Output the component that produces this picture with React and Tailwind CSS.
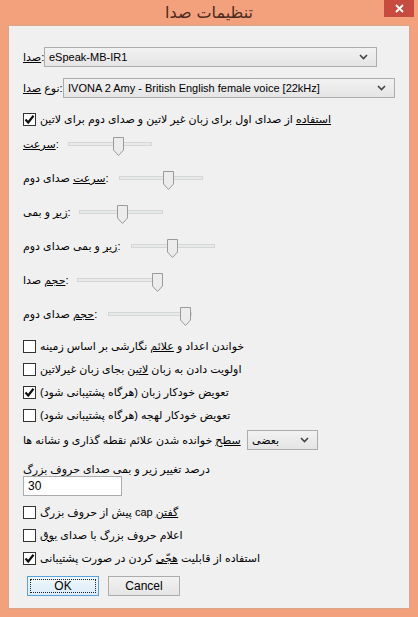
import React from "react";

const font = { fontFamily: '"Liberation Sans", "DejaVu Sans", sans-serif' };

const U = ({ children }) => <span className="underline">{children}</span>;
const Colon = () => <span>:</span>;

const Check = ({ checked }) => (
  <span className="w-[13px] h-[13px] border border-[#333333] bg-white flex items-center justify-center shrink-0">
    {checked && (
      <svg width="11" height="11" viewBox="0 0 11 11">
        <path d="M1.5 5.5 L4.2 8.5 L9.5 1.8" fill="none" stroke="#111" strokeWidth="2.2" />
      </svg>
    )}
  </span>
);

const CheckRow = ({ checked, children }) => (
  <div className="h-[16px] flex items-center gap-[4px]">
    <Check checked={checked} />
    <span className="leading-[16px] whitespace-nowrap">{children}</span>
  </div>
);

const Chevron = () => (
  <svg width="9" height="6" viewBox="0 0 9 6">
    <path d="M1 1 L4.5 4.5 L8 1" fill="none" stroke="#444" strokeWidth="1.6" />
  </svg>
);

const Combo = ({ value, className }) => (
  <div
    className={
      "h-[20px] border border-[#acacac] bg-gradient-to-b from-[#f2f2f2] to-[#e5e5e5] flex items-center justify-between pl-[4px] pr-[8px] shrink-0 " +
      className
    }
  >
    <span className="leading-[18px] whitespace-nowrap">{value}</span>
    <Chevron />
  </div>
);

// labelW puts the track where it sits in the dialog
const Slider = ({ label, labelW, pos }) => (
  <div className="h-[20px] flex items-center">
    <span className="leading-[16px] whitespace-nowrap shrink-0" style={{ width: labelW }}>
      {label}
    </span>
    <div className="relative h-[4px] w-[84px] border border-[#d6d6d6] bg-[#e7eaea]">
      <div className="absolute top-[-6px]" style={{ left: pos }}>
        <svg width="11" height="19" viewBox="0 0 11 19">
          <path d="M0.5 0.5 H10.5 V13 L5.5 18.5 L0.5 13 Z" fill="#ececec" stroke="#9a9a9a" />
        </svg>
      </div>
    </div>
  </div>
);

export default function App() {
  return (
    <div className="w-[418px] h-[617px] bg-[#f2a17c] flex flex-col text-[11px] text-black" style={font}>
      {/* title bar */}
      <div className="h-[25px] relative flex items-center justify-center shrink-0">
        <span className="text-[16px] text-[#4a2a1c] leading-[20px]" style={{ fontFamily: '"DejaVu Sans", sans-serif' }}>
          تنظیمات صدا
        </span>
        <div className="absolute top-0 right-[4px] w-[30px] h-[17px] bg-[#c74b3f] flex items-center justify-center">
          <svg width="9" height="9" viewBox="0 0 9 9">
            <path d="M1 1 L8 8 M8 1 L1 8" stroke="#fff" strokeWidth="1.8" />
          </svg>
        </div>
      </div>

      {/* client */}
      <div className="mx-[8px] mb-[8px] flex-1 bg-[#f0f0f0] border border-[#d9a58c] pl-[14px] pt-[21px] flex flex-col">
        <div className="flex items-center">
          <span className="w-[21px] whitespace-nowrap">
            <U>صدا</U><Colon />
          </span>
          <Combo value="eSpeak-MB-IR1" className="w-[333px]" />
        </div>
        <div className="flex items-center mt-[11px]">
          <span className="w-[40px] whitespace-nowrap">
            <span>نوع </span><U>صدا</U><Colon />
          </span>
          <Combo value="IVONA 2 Amy - British English female voice [22kHz]" className="w-[332px]" />
        </div>

        <div className="mt-[13px]">
          <CheckRow checked>
            <U>استفاده</U> از صدای اول برای زبان غیر لاتین و صدای دوم برای لاتین
          </CheckRow>
        </div>

        <div className="mt-[7px] flex flex-col gap-[14px]">
          <Slider label={<><U>سرعت</U><Colon /></>} labelW="45px" pos="44px" />
          <Slider label={<><U>سرعت</U><span> صدای دوم</span><Colon /></>} labelW="96px" pos="43px" />
          <Slider label={<><U>زیر</U><span> و بمی</span><Colon /></>} labelW="56px" pos="37px" />
          <Slider label={<><U>زیر</U><span> و بمی صدای دوم</span><Colon /></>} labelW="108px" pos="35px" />
          <Slider label={<><U>حجم</U><span> صدا</span><Colon /></>} labelW="54px" pos="74px" />
          <Slider label={<><U>حجم</U><span> صدای دوم</span><Colon /></>} labelW="85px" pos="71px" />
        </div>

        <div className="mt-[14px] flex flex-col gap-[7px]">
          <CheckRow>خواندن اعداد و <U>علائم</U> نگارشی بر اساس زمینه</CheckRow>
          <CheckRow>اولویت دادن به زبان <U>لاتین</U> بجای زبان غیرلاتین</CheckRow>
          <CheckRow checked>تعویض خودکار زبان (هرگاه پشتیبانی شود)</CheckRow>
          <CheckRow>تعویض خودکار لهجه (هرگاه پشتیبانی شود)</CheckRow>
        </div>

        <div className="mt-[7px] flex items-center">
          <span className="w-[224px] whitespace-nowrap">
            <U>سطح</U> خوانده شدن علائم نقطه گذاری و نشانه ها
          </span>
          <Combo value="بعضی" className="w-[71px]" />
        </div>

        <div className="mt-[12px] leading-[14px]">درصد تغییر زیر و بمی صدای حروف بزرگ</div>
        <div className="w-[99px] h-[20px] border border-[#acacac] bg-white flex items-center px-[4px] text-[12px]">30</div>

        <div className="mt-[8px] flex flex-col gap-[7px]">
          <CheckRow>پیش از حروف بزرگ cap <U>گفتن</U></CheckRow>
          <CheckRow>اعلام حروف بزرگ با صدای <U>بوق</U></CheckRow>
          <CheckRow checked>استفاده از قابلیت <U>هجّی</U> کردن در صورت پشتیبانی</CheckRow>
        </div>

        <div className="mt-[10px] ml-[4px] flex gap-[9px] text-[12px]">
          <div className="w-[72px] h-[20px] border border-[#5aa2de] bg-gradient-to-b from-[#eef7fd] to-[#dcecf8] p-[2px]">
            <div className="w-full h-full border border-dotted border-[#222] flex items-center justify-center leading-none">
              OK
            </div>
          </div>
          <div className="w-[72px] h-[20px] border border-[#acacac] bg-gradient-to-b from-[#f2f2f2] to-[#e5e5e5] flex items-center justify-center">
            Cancel
          </div>
        </div>
      </div>
    </div>
  );
}
